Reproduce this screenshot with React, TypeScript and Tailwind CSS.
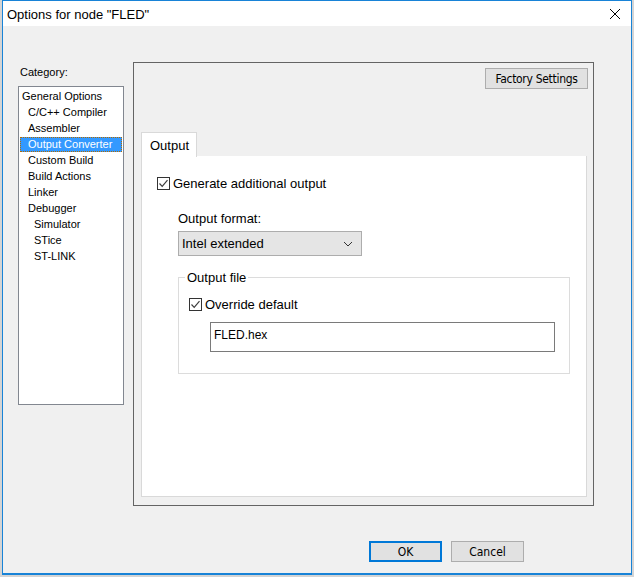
import React from 'react';

const tree = [
  { label: 'General Options', indent: 0 },
  { label: 'C/C++ Compiler', indent: 1 },
  { label: 'Assembler', indent: 1 },
  { label: 'Output Converter', indent: 1, selected: true },
  { label: 'Custom Build', indent: 1 },
  { label: 'Build Actions', indent: 1 },
  { label: 'Linker', indent: 1 },
  { label: 'Debugger', indent: 1 },
  { label: 'Simulator', indent: 2 },
  { label: 'STice', indent: 2 },
  { label: 'ST-LINK', indent: 2 },
];

function CheckBox() {
  return (
    <span className="w-[13px] h-[13px] border border-[#333333] bg-white flex items-center justify-center shrink-0">
      <svg width="11" height="11" viewBox="0 0 11 11">
        <path d="M1.5 5.5 L4.2 8.3 L9.5 2.2" fill="none" stroke="#3c3c3c" strokeWidth="1.2" />
      </svg>
    </span>
  );
}

export default function App() {
  return (
    <div className="w-[634px] h-[577px] bg-[#d4d4d4] pl-[2px] font-['Liberation_Sans',Arial,sans-serif] text-[12px] text-black leading-none">
      <div className="w-[630px] h-[575px] border border-[#1883d7] border-b-2 flex flex-col bg-[#f0f0f0]">
        {/* Title bar */}
        <div className="h-[25px] bg-white flex items-center justify-between shrink-0">
          <span className="pl-[4px] text-[13px] pt-[1px]">Options for node "FLED"</span>
          <svg width="12" height="12" viewBox="0 0 12 12" className="mr-[10px]">
            <path d="M1 1 L11 11 M11 1 L1 11" stroke="#000" strokeWidth="1" />
          </svg>
        </div>

        {/* Body */}
        <div className="flex flex-1 relative">
          {/* Category */}
          <div className="ml-[15px] mt-[41px] flex flex-col">
            <span className="text-[11px] mb-[8px] ml-[2px]">Category:</span>
            <div className="w-[106px] h-[319px] border border-[#828790] bg-white pt-[1px] text-[11px]">
              {tree.map((t) => (
                <div
                  key={t.label}
                  className={
                    'h-[16px] flex items-center ' +
                    (t.indent === 0 ? 'pl-[3px]' : t.indent === 1 ? 'pl-[9px]' : 'pl-[15px]')
                  }
                >
                  {t.selected ? (
                    <span className="-ml-[8px] pl-[7px] w-[102px] h-[15px] flex items-center bg-[#3399ff] text-white border border-dotted border-[#b36b00]">
                      {t.label}
                    </span>
                  ) : (
                    t.label
                  )}
                </div>
              ))}
            </div>
          </div>

          {/* Options panel */}
          <div className="ml-[9px] mt-[36px] w-[461px] h-[444px] border border-[#646464] flex flex-col">
            <div className="flex justify-end pt-[5px] pr-[5px]">
              <button className="w-[103px] h-[21px] bg-[#e1e1e1] border border-[#adadad] text-[12px] font-['DejaVu_Sans_Condensed',sans-serif] tracking-[-0.3px]">
                Factory Settings
              </button>
            </div>

            <div className="ml-[7px] mr-[6px] mt-[43px] mb-[8px] flex-1 flex flex-col text-[13px]">
              {/* Tab header */}
              <div className="flex h-[25px]">
                <div className="w-[56px] h-[25px] bg-white border border-b-0 border-[#d9d9d9] flex items-center pl-[8px] relative z-10">
                  Output
                </div>
                <div className="flex-1 border-b border-[#d9d9d9]" />
              </div>

              {/* Tab page */}
              <div className="flex-1 bg-white border border-t-0 border-[#d9d9d9] -mt-[1px] pt-[21px] pl-[15px]">
                <label className="flex items-center gap-[3px] h-[13px]">
                  <CheckBox />
                  <span>Generate additional output</span>
                </label>

                <div className="ml-[21px] mt-[22px]">Output format:</div>
                <div className="ml-[21px] mt-[6px] w-[184px] h-[25px] bg-[#e5e5e5] border border-[#adadad] flex items-center justify-between pl-[3px] pr-[8px]">
                  <span>Intel extended</span>
                  <svg width="10" height="6" viewBox="0 0 10 6">
                    <path d="M1 1 L5 5 L9 1" fill="none" stroke="#333" strokeWidth="1" />
                  </svg>
                </div>

                {/* Output file group */}
                <div className="ml-[21px] mt-[21px] w-[392px] h-[97px] border border-[#dcdcdc] relative pt-[20px] pl-[10px]">
                  <span className="absolute -top-[7px] left-[6px] bg-white px-[2px]">Output file</span>
                  <label className="flex items-center gap-[3px] h-[13px]">
                    <CheckBox />
                    <span>Override default</span>
                  </label>
                  <div className="ml-[21px] mt-[11px] w-[345px] h-[30px] border border-[#7a7a7a] bg-white pl-[3px] pt-[6px] text-[12px]">
                    FLED.hex
                  </div>
                </div>
              </div>
            </div>
          </div>

          {/* Dialog buttons */}
          <div className="absolute left-[366px] top-[515px] flex gap-[9px]">
            <button className="w-[73px] h-[21px] bg-[#e1e1e1] border-2 border-[#0078d7] text-[12px] font-['DejaVu_Sans_Condensed',sans-serif]">
              OK
            </button>
            <button className="w-[73px] h-[21px] bg-[#e1e1e1] border border-[#adadad] text-[12px] font-['DejaVu_Sans_Condensed',sans-serif]">
              Cancel
            </button>
          </div>
        </div>
      </div>
    </div>
  );
}
